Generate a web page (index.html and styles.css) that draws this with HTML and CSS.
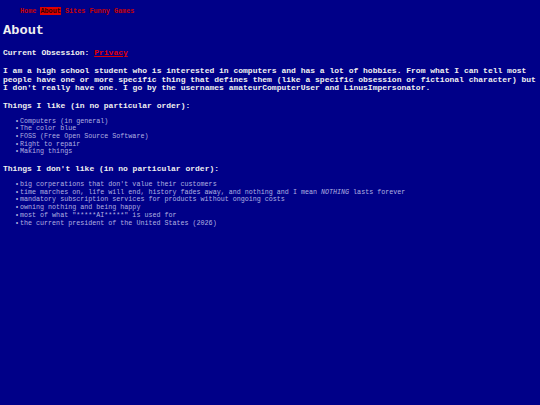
FILE: index.html
```html
<!DOCTYPE html>
<html>
<head>
<meta charset="utf-8">
<link rel="stylesheet" href="styles.css">
</head>
<body>
<nav class="nav">
  <a class="nav-link" href="#">Home</a>
  <a class="nav-link active" href="#">About</a>
  <a class="nav-link" href="#">Sites</a>
  <a class="nav-link" href="#">Funny</a>
  <a class="nav-link" href="#">Games</a>
</nav>
<h1 class="title">About</h1>
<p class="obsession">Current Obsession: <a class="link" href="#">Privacy</a></p>
<p class="intro">I am a high school student who is interested in computers and has a lot of hobbies. From what I can tell most people have one or more specific thing that defines them (like a specific obsession or fictional character) but I don't really have one. I go by the usernames amateurComputerUser and LinusImpersonator.</p>
<h2 class="subhead">Things I like (in no particular order):</h2>
<ul class="list">
  <li>Computers (in general)</li>
  <li>The color blue</li>
  <li>FOSS (Free Open Source Software)</li>
  <li>Right to repair</li>
  <li>Making things</li>
</ul>
<h2 class="subhead">Things I don't like (in no particular order):</h2>
<ul class="list">
  <li>big corperations that don't value their customers</li>
  <li>time marches on, life will end, history fades away, and nothing and I mean <em>NOTHING</em> lasts forever</li>
  <li>mandatory subscription services for products without ongoing costs</li>
  <li>owning nothing and being happy</li>
  <li>most of what "*****AI*****" is used for</li>
  <li>the current president of the United States (2026)</li>
</ul>
</body>
</html>
```
FILE: styles.css
```css
html, body {
  background: #000088;
}
body {
  margin: 0;
  padding: 3px;
  font-family: "Liberation Mono", "DejaVu Sans Mono", monospace;
  color: #f0f0f0;
}
.nav {
  padding: 4px 0 0 17px;
  height: 11px;
  font-size: 6.8px;
  line-height: 9px;
  font-weight: bold;
}
.nav-link {
  color: #c80000;
  text-decoration: none;
}
.active {
  background: #e00000;
  color: #300000;
}
.title {
  font-size: 13.7px;
  line-height: 16px;
  margin: 5px 0 0 0;
  font-weight: bold;
}
.obsession {
  font-size: 8px;
  font-weight: bold;
  line-height: 9px;
  margin: 9px 0 0 0;
}
.link {
  color: #e00000;
}
.intro {
  font-size: 8px;
  font-weight: bold;
  line-height: 8.5px;
  margin: 10px 0 0 0;
}
.subhead {
  font-size: 8px;
  line-height: 9px;
  margin: 8px 0 0 0;
}
.list {
  margin: 8px 0 0 0;
  padding-left: 12px;
  list-style: none;
  font-size: 6.7px;
  line-height: 7.7px;
  color: #b0b0e0;
}
.list li::before {
  content: "\2022";
  display: inline-block;
  width: 5px;
}
```
